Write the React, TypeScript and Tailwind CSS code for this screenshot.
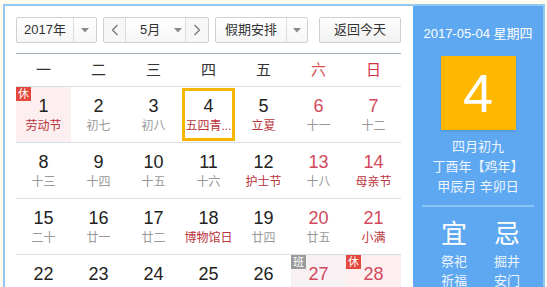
import React from "react";

type Cell = {
  d: number;
  l: string;
  fest?: boolean;
  wk?: boolean;
  badge?: "休" | "班";
  bg?: string;
  today?: boolean;
};

const rows: Cell[][] = [
  [
    { d: 1, l: "劳动节", fest: true, badge: "休", bg: "bg-[#fdeff0]" },
    { d: 2, l: "初七" },
    { d: 3, l: "初八" },
    { d: 4, l: "五四青...", fest: true, today: true },
    { d: 5, l: "立夏", fest: true },
    { d: 6, l: "十一", wk: true },
    { d: 7, l: "十二", wk: true },
  ],
  [
    { d: 8, l: "十三" },
    { d: 9, l: "十四" },
    { d: 10, l: "十五" },
    { d: 11, l: "十六" },
    { d: 12, l: "护士节", fest: true },
    { d: 13, l: "十八", wk: true },
    { d: 14, l: "母亲节", fest: true, wk: true },
  ],
  [
    { d: 15, l: "二十" },
    { d: 16, l: "廿一" },
    { d: 17, l: "廿二" },
    { d: 18, l: "博物馆日", fest: true },
    { d: 19, l: "廿四" },
    { d: 20, l: "廿五", wk: true },
    { d: 21, l: "小满", fest: true, wk: true },
  ],
  [
    { d: 22, l: "廿七" },
    { d: 23, l: "廿八" },
    { d: 24, l: "廿九" },
    { d: 25, l: "三十" },
    { d: 26, l: "五月" },
    { d: 27, l: "初二", wk: true, badge: "班", bg: "bg-[#f7f1f4]" },
    { d: 28, l: "初三", wk: true, badge: "休", bg: "bg-[#fdeff0]" },
  ],
];

const font = { fontFamily: '"Liberation Sans", "Noto Sans CJK SC", sans-serif' };

function Arrow() {
  return (
    <svg width="8" height="5" viewBox="0 0 8 5">
      <path d="M0 0 L8 0 L4 4.5 Z" fill="#8a8a8a" />
    </svg>
  );
}

function Chevron({ dir }: { dir: "l" | "r" }) {
  return (
    <svg width="8" height="12" viewBox="0 0 8 12">
      <path
        d={dir === "l" ? "M6.5 1 L1.5 6 L6.5 11" : "M1.5 1 L6.5 6 L1.5 11"}
        stroke="#777"
        strokeWidth="1.3"
        fill="none"
      />
    </svg>
  );
}

export default function App() {
  return (
    <div className="w-[547px] h-[287px] overflow-hidden bg-[#fffbee] pt-[4px] pl-[3px]" style={font}>
      <div className="flex w-[542px] h-[400px] border-2 border-[#92c8ef]">
        {/* left panel */}
        <div className="w-[408px] bg-white pl-[11px] pt-[11px]">
          {/* header */}
          <div className="flex items-center h-[26px] text-[13px] text-[#333]">
            <div className="flex h-[26px] w-[81px] border border-[#cfcfcf] rounded-[2px] bg-gradient-to-b from-white to-[#f6f6f6]">
              <div className="w-[56px] flex items-center justify-center">2017年</div>
              <div className="flex-1 flex items-center justify-center border-l border-[#dcdcdc]">
                <Arrow />
              </div>
            </div>
            <div className="ml-[6px] flex h-[26px] w-[106px] border border-[#cfcfcf] rounded-[2px] bg-gradient-to-b from-white to-[#f6f6f6]">
              <div className="w-[22px] flex items-center justify-center border-r border-[#dcdcdc] bg-[#f7f7f7]">
                <Chevron dir="l" />
              </div>
              <div className="w-[59px] flex items-center pl-[14px] gap-[14px]">
                <span>5月</span>
                <Arrow />
              </div>
              <div className="flex-1 flex items-center justify-center border-l border-[#dcdcdc] bg-[#f7f7f7]">
                <Chevron dir="r" />
              </div>
            </div>
            <div className="ml-[6px] flex h-[26px] w-[93px] border border-[#cfcfcf] rounded-[2px] bg-gradient-to-b from-white to-[#f6f6f6]">
              <div className="w-[70px] flex items-center justify-center">假期安排</div>
              <div className="flex-1 flex items-center justify-center border-l border-[#dcdcdc]">
                <Arrow />
              </div>
            </div>
            <div className="ml-[11px] flex h-[26px] w-[82px] items-center justify-center border border-[#cfcfcf] rounded-[2px] bg-gradient-to-b from-white to-[#f1f1f1]">
              返回今天
            </div>
          </div>
          {/* separator */}
          <div className="mt-[10px] w-[385px] h-[1px] bg-[#a3b1be]" />
          {/* weekdays */}
          <div className="grid grid-cols-[repeat(7,55px)] h-[32px] items-center text-[15px] text-center">
            {["一", "二", "三", "四", "五"].map((w) => (
              <div key={w} className="text-[#333]">{w}</div>
            ))}
            <div className="text-[#d9534f]">六</div>
            <div className="text-[#d9304a]">日</div>
          </div>
          {/* rows */}
          {rows.map((row, ri) => (
            <div key={ri} className="grid grid-cols-[repeat(7,55px)] w-[385px] border-t border-[#d7dfe8]">
              {row.map((c) => (
                <div
                  key={c.d}
                  className={`relative h-[55px] flex flex-col items-center ${c.bg ?? ""}`}
                >
                  {c.today && (
                    <div className="absolute left-[1px] top-[1px] w-[53px] h-[53px] border-[3px] border-[#f5b700]" />
                  )}
                  {c.badge && (
                    <div
                      className={`absolute left-0 top-0 w-[15px] h-[14px] flex items-center justify-center text-[11px] leading-none text-white ${
                        c.badge === "休" ? "bg-[#e4473b]" : "bg-[#9a9a9a]"
                      }`}
                    >
                      {c.badge}
                    </div>
                  )}
                  <div
                    className={`pt-[9px] text-[18px] leading-[20px] ${
                      c.wk ? "text-[#d2485c]" : "text-[#222]"
                    }`}
                  >
                    {c.d}
                  </div>
                  <div
                    className={`mt-[2px] text-[12px] leading-[17px] whitespace-nowrap ${
                      c.fest ? "text-[#b9333a]" : "text-[#999]"
                    }`}
                  >
                    {c.l}
                  </div>
                </div>
              ))}
            </div>
          ))}
        </div>
        {/* right panel */}
        <div className="w-[130px] bg-[#5ea8f1] flex flex-col items-center text-white">
          <div className="mt-[19px] text-[13px] leading-[18px]">2017-05-04 星期四</div>
          <div className="mt-[13px] w-[75px] h-[74px] bg-[#ffb800] flex items-center justify-center text-[54px] leading-none shadow-[0_1px_2px_rgba(0,0,0,0.15)]">
            4
          </div>
          <div className="mt-[7px] text-[13px] leading-[20px] text-center text-[#eef6ff]">
            <div>四月初九</div>
            <div>丁酉年【鸡年】</div>
            <div>甲辰月 辛卯日</div>
          </div>
          <div className="mt-[8px] w-[112px] h-[2px] bg-[#8cc4f6]" />
          <div className="mt-[12px] flex w-full justify-between pl-[19px] pr-[14px]">
            <div className="flex flex-col items-center w-[44px]">
              <div className="text-[26px] leading-[30px]">宜</div>
              <div className="mt-[3px] text-[13px] leading-[19px] text-[#eef6ff] text-center">
                <div>祭祀</div>
                <div>祈福</div>
              </div>
            </div>
            <div className="flex flex-col items-center w-[44px]">
              <div className="text-[26px] leading-[30px]">忌</div>
              <div className="mt-[3px] text-[13px] leading-[19px] text-[#eef6ff] text-center">
                <div>掘井</div>
                <div>安门</div>
              </div>
            </div>
          </div>
        </div>
      </div>
    </div>
  );
}
